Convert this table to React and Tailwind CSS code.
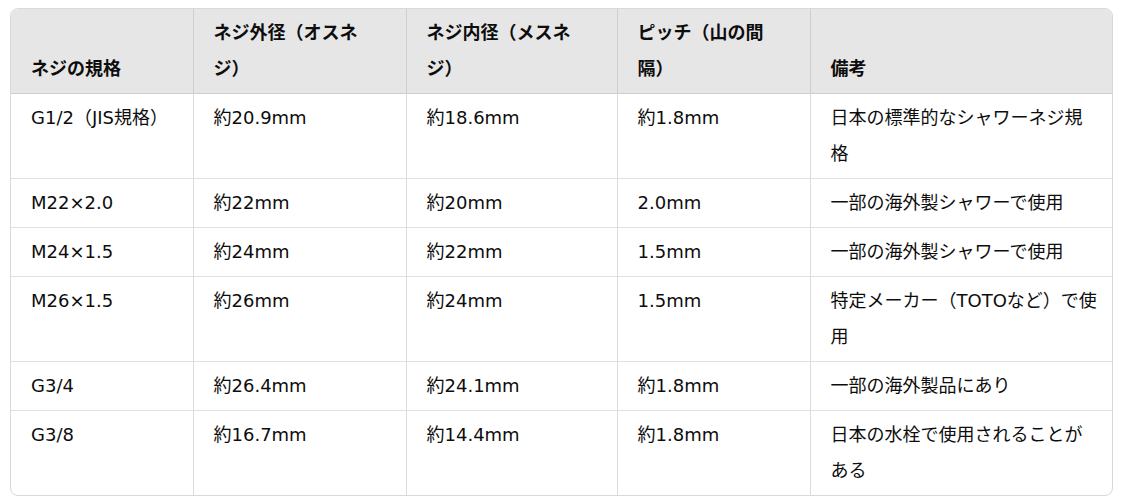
import React from 'react';

const headers = [
  'ネジの規格',
  'ネジ外径（オスネジ）',
  'ネジ内径（メスネジ）',
  'ピッチ（山の間隔）',
  '備考',
];

const rows = [
  ['G1/2（JIS規格）', '約20.9mm', '約18.6mm', '約1.8mm', '日本の標準的なシャワーネジ規格'],
  ['M22×2.0', '約22mm', '約20mm', '2.0mm', '一部の海外製シャワーで使用'],
  ['M24×1.5', '約24mm', '約22mm', '1.5mm', '一部の海外製シャワーで使用'],
  ['M26×1.5', '約26mm', '約24mm', '1.5mm', '特定メーカー（TOTOなど）で使用'],
  ['G3/4', '約26.4mm', '約24.1mm', '約1.8mm', '一部の海外製品にあり'],
  ['G3/8', '約16.7mm', '約14.4mm', '約1.8mm', '日本の水栓で使用されることがある'],
];

const widths = ['w-[182px]', 'w-[213px]', 'w-[211px]', 'w-[193px]', 'w-[302px]'];

export default function App() {
  return (
    <div className="min-h-screen bg-white pt-[8px] pl-[10px] font-['DejaVu_Sans','Noto_Sans_CJK_JP',sans-serif] text-[18px] leading-[36px] text-[#0d0d0d] [text-spacing-trim:space-all]">
      <div className="w-[1103px] border border-[#d9d9d9] rounded-[8px] overflow-hidden">
        <table className="w-full table-fixed border-collapse">
          <colgroup>
            {widths.map((w, i) => (
              <col key={i} className={w} />
            ))}
          </colgroup>
          <thead>
            <tr className="bg-[#e6e6e6]">
              {headers.map((h, i) => (
                <th
                  key={i}
                  className="border-b border-l first:border-l-0 border-[#cfcfcf] pl-[20px] pr-[20px] last:pr-[14px] py-[6px] text-left align-bottom font-bold"
                >
                  {h}
                </th>
              ))}
            </tr>
          </thead>
          <tbody>
            {rows.map((r, ri) => (
              <tr key={ri} className="border-b last:border-b-0 border-[#e0e0e0]">
                {r.map((c, ci) => (
                  <td
                    key={ci}
                    className="border-l first:border-l-0 border-[#dcdcdc] pl-[20px] pr-[20px] last:pr-[14px] py-[6px] align-top"
                  >
                    {c}
                  </td>
                ))}
              </tr>
            ))}
          </tbody>
        </table>
      </div>
    </div>
  );
}
